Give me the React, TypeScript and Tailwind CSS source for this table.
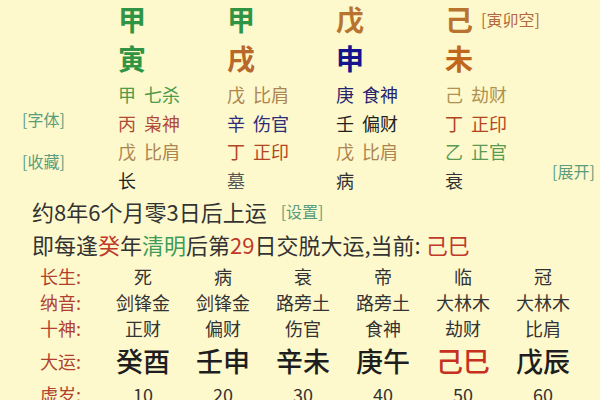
import React from 'react';

const font = { fontFamily: '"Noto Sans CJK SC", "Noto Sans", sans-serif' };

type Cell = { t: string; c: string };

const pillars: { stem: Cell; branch: Cell; hidden: Cell[]; life: Cell; extra?: string }[] = [
  {
    stem: { t: '甲', c: 'text-[#2f9444]' },
    branch: { t: '寅', c: 'text-[#2f9444]' },
    hidden: [
      { t: '甲 七杀', c: 'text-[#4f9a4c]' },
      { t: '丙 枭神', c: 'text-[#b14a35]' },
      { t: '戊 比肩', c: 'text-[#ad8550]' },
    ],
    life: { t: '长', c: 'text-[#222222]' },
  },
  {
    stem: { t: '甲', c: 'text-[#2f9444]' },
    branch: { t: '戌', c: 'text-[#b8682a]' },
    hidden: [
      { t: '戊 比肩', c: 'text-[#ad8550]' },
      { t: '辛 伤官', c: 'text-[#2c2c78]' },
      { t: '丁 正印', c: 'text-[#b2451f]' },
    ],
    life: { t: '墓', c: 'text-[#555555]' },
  },
  {
    stem: { t: '戊', c: 'text-[#b8742f]' },
    branch: { t: '申', c: 'text-[#14148f]' },
    hidden: [
      { t: '庚 食神', c: 'text-[#25256e]' },
      { t: '壬 偏财', c: 'text-[#222222]' },
      { t: '戊 比肩', c: 'text-[#ad8550]' },
    ],
    life: { t: '病', c: 'text-[#333333]' },
  },
  {
    stem: { t: '己', c: 'text-[#b8742f]' },
    branch: { t: '未', c: 'text-[#c0661d]' },
    hidden: [
      { t: '己 劫财', c: 'text-[#b0914f]' },
      { t: '丁 正印', c: 'text-[#b2451f]' },
      { t: '乙 正官', c: 'text-[#5a9a52]' },
    ],
    life: { t: '衰', c: 'text-[#333333]' },
    extra: '[寅卯空]',
  },
];

const rows: { label: string; cells: string[]; big?: boolean }[] = [
  { label: '长生:', cells: ['死', '病', '衰', '帝', '临', '冠'] },
  { label: '纳音:', cells: ['剑锋金', '剑锋金', '路旁土', '路旁土', '大林木', '大林木'] },
  { label: '十神:', cells: ['正财', '偏财', '伤官', '食神', '劫财', '比肩'] },
  { label: '大运:', cells: ['癸酉', '壬申', '辛未', '庚午', '己巳', '戊辰'], big: true },
  { label: '虚岁:', cells: ['10', '20', '30', '40', '50', '60'] },
];

export default function App() {
  return (
    <div className="w-[600px] h-[400px] overflow-hidden bg-[#fdf9cd]" style={font}>
      {/* 四柱 */}
      <div className="flex">
        <div className="w-[118px] pl-[22px] pt-[105px] flex flex-col gap-[14px] text-[16px] leading-[28px] text-[#5a9d7c]">
          <span>[字体]</span>
          <span>[收藏]</span>
        </div>
        {pillars.map((p, i) => (
          <div key={i} className={`${i === 3 ? 'w-[107px]' : 'w-[109px]'} flex flex-col`}>
            <div className="h-[38px] flex items-center whitespace-nowrap">
              <span className={`text-[28px] leading-[38px] font-bold ${p.stem.c}`}>{p.stem.t}</span>
              {p.extra && <span className="ml-[8px] text-[16px] text-[#b5673a]">{p.extra}</span>}
            </div>
            <div className={`h-[40px] text-[28px] leading-[40px] font-bold ${p.branch.c}`}>{p.branch.t}</div>
            <div className="mt-[2px] text-[18px] leading-[28.5px]">
              {p.hidden.map((h, j) => {
                const [a, b] = h.t.split(' ');
                return (
                  <div key={j} className={`${h.c} flex gap-[8px]`}>
                    <span>{a}</span>
                    <span>{b}</span>
                  </div>
                );
              })}
              <div className={p.life.c}>{p.life.t}</div>
            </div>
          </div>
        ))}
        <div className="flex-1 flex flex-col justify-end">
          <span className="text-[16px] leading-[28px] text-[#5a9d7c] mb-[9px] whitespace-nowrap">[展开]</span>
        </div>
      </div>

      {/* 起运 */}
      <div className="pl-[32px] mt-[1px] text-[22px] leading-[33px] text-[#333333]">
        <div className="flex items-center">
          <span>约8年6个月零3日后上运</span>
          <span className="ml-[14px] text-[16px] text-[#5a9d7c]">[设置]</span>
        </div>
        <div className="whitespace-nowrap">
          即每逢<span className="text-[#c0392b]">癸</span>年<span className="text-[#3d9c5c]">清明</span>后第
          <span className="text-[#c0392b]">29</span>日交脱大运,当前: <span className="text-[#c0392b]">己巳</span>
        </div>
      </div>

      {/* 大运表 */}
      <div className="pl-[40px] mt-[2px]">
        {rows.map((r, i) => (
          <div
            key={i}
            className={`grid grid-cols-[63px_repeat(6,80px)] items-center ${
              r.big ? 'h-[36px]' : i === 4 ? 'h-[34px]' : 'h-[26px]'
            }`}
          >
            <span className="text-[18px] text-[#b2402e]">{r.label}</span>
            {r.cells.map((c, j) => (
              <span
                key={j}
                className={`text-center ${
                  r.big
                    ? `text-[27px] font-medium ${j === 4 ? 'text-[#c7301f]' : 'text-[#1e1e1e]'}`
                    : 'text-[18px] text-[#333333]'
                }`}
              >
                {c}
              </span>
            ))}
          </div>
        ))}
      </div>
    </div>
  );
}
